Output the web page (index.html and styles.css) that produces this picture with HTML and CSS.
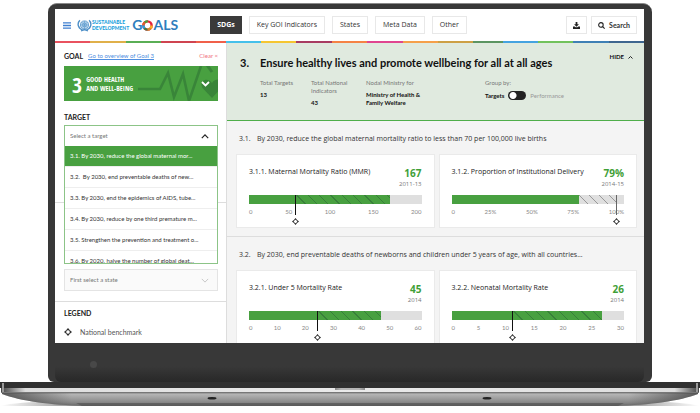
FILE: index.html
```html
<!DOCTYPE html>
<html lang="en">
<head>
<meta charset="utf-8">
<meta name="viewport" content="width=device-width, initial-scale=1">
<title>Sustainable Development Goals</title>
<link rel="stylesheet" href="styles.css">
</head>
<body>
<svg class="defs" width="0" height="0" aria-hidden="true">
  <symbol id="benchmark" viewBox="0 0 14 14">
    <circle cx="7" cy="7" r="4" fill="#fff" stroke="currentColor" stroke-width="1.6"/>
    <path d="M7 0 9.4 3H4.600ZM7 14 4.600 11H9.400ZM0 7 3 4.600V9.400ZM14 7 11 9.400V4.600Z" fill="currentColor"/>
  </symbol>
</svg>
<div class="laptop">
  <div class="lid">
    <div class="screen">
      <header class="topbar">
        <button class="menu" aria-label="Menu"><svg viewBox="0 0 8 7"><path d="M0 .8h8M0 3.500h8M0 6.200h8" stroke="#3f7fd0" stroke-width="1.300"/></svg></button>
        <a class="logo" href="#">
          <svg class="emblem" viewBox="0 0 26 22" fill="none" stroke="#4d8fc7">
            <circle cx="13" cy="10" r="7" stroke-width="1.300" fill="#b9d6ee"/>
            <circle cx="13" cy="10" r="3.500"/>
            <path d="M13 3v14M6 10h14M8 5l10 10M18 5 8 15" stroke-width=".8"/>
            <path d="M5 2C0 7 1 15 9 18.500M21 2c5 5 4 13-4 16.500M7 20.500l6-2.500 6 2.500" stroke-width="2.400"/>
          </svg>
          <span class="logo-small">SUSTAINABLE<br>DEVELOPMENT</span>
          <span class="logo-big">G<svg class="wheel" viewBox="0 0 20 20" fill="none" stroke-width="4.500">
            <circle cx="10" cy="10" r="7.500" stroke="#e5243b"/>
            <circle cx="10" cy="10" r="7.500" stroke="#fcb022" pathLength="8" stroke-dasharray="1 7"/>
            <circle cx="10" cy="10" r="7.500" stroke="#d08f2a" pathLength="8" stroke-dasharray="1 7" stroke-dashoffset="-1"/>
            <circle cx="10" cy="10" r="7.500" stroke="#3f7e44" pathLength="8" stroke-dasharray="1 7" stroke-dashoffset="-2"/>
            <circle cx="10" cy="10" r="7.500" stroke="#26a3dd" pathLength="8" stroke-dasharray="1 7" stroke-dashoffset="-3"/>
            <circle cx="10" cy="10" r="7.500" stroke="#e0602c" pathLength="8" stroke-dasharray="1 7" stroke-dashoffset="-4"/>
            <circle cx="10" cy="10" r="7.500" stroke="#4c9f38" pathLength="8" stroke-dasharray="1 7" stroke-dashoffset="-5"/>
          </svg>ALS</span>
        </a>
        <nav class="nav">
          <a class="active" href="#">SDGs</a>
          <a href="#">Key GOI Indicators</a>
          <a href="#">States</a>
          <a href="#">Meta Data</a>
          <a href="#">Other</a>
        </nav>
        <div class="tools">
          <button aria-label="Download"><svg viewBox="0 0 12 12"><path d="M4.500 0h3v4h2.700L6 8.200 1.800 4h2.700ZM0 7.500h3L4.500 9h3L9 7.500h3V12H0Z" fill="#222"/></svg></button>
          <button><svg viewBox="0 0 12 12" fill="none" stroke="#222" stroke-width="1.800"><circle cx="5" cy="5" r="3.900"/><path d="m8 8 3.400 3.400"/></svg>Search</button>
        </div>
      </header>
      <div class="stripe"></div>
      <div class="columns">
        <aside class="sidebar">
          <section class="target">
            <div class="goal-row"><h2>GOAL</h2><a href="#">Go to overview of Goal 3</a><button class="clear">Clear ×</button></div>
            <button class="goal">
              <svg class="pulse" viewBox="0 0 80 35" fill="none" stroke="#398539" stroke-width="2.600">
                <path d="M0 23h22l8-16 6 24 9-23 6 27 12-35"/>
                <path d="m69-1 5 7" stroke-width="3"/>
                <path d="M74 32 64.500 22c-4-6 4-12 9.500-5 5-7 14-2 10 4Z" fill="#398539" stroke="none"/>
                <path d="m64 16 3.500 3.500 3.500-3.500" stroke="#fff" stroke-width="1.800"/>
              </svg>
              <span class="goal-number">3</span>
              <span class="goal-name">GOOD HEALTH<br>AND WELL-BEING</span>
            </button>
            <h2><label for="target">TARGET</label></h2>
            <div class="picker open">
              <select id="target"><option>Select a target</option></select>
              <svg viewBox="0 0 10 6"><path d="m1 5 4-4 4 4" fill="none" stroke="#222" stroke-width="1.500"/></svg>
              <ul class="options" role="listbox" aria-label="Targets">
                <li role="option" aria-selected="true">3.1. By 2030, reduce the global maternal mor...</li>
                <li role="option">3.2. &nbsp;By 2030, end preventable deaths of new...</li>
                <li role="option">3.3. By 2030, end the epidemics of AIDS, tube...</li>
                <li role="option">3.4. By 2030, reduce by one third premature m...</li>
                <li role="option">3.5. Strengthen the prevention and treatment o...</li>
                <li role="option">3.6. By 2020, halve the number of global deat...</li>
              </ul>
            </div>
          </section>
          <section class="state">
            <div class="picker">
              <select aria-label="State" disabled><option>First select a state</option></select>
              <svg viewBox="0 0 10 6"><path d="m1 1 4 4 4-4" fill="none" stroke="#bbb"/></svg>
            </div>
          </section>
          <section class="legend">
            <h2>LEGEND</h2>
            <p><svg><use href="#benchmark"/></svg>National benchmark</p>
          </section>
        </aside>
        <main>
          <section class="hero">
            <span class="hero-number">3.</span>
            <div class="hero-body">
              <h1>Ensure healthy lives and promote wellbeing for all at all ages</h1>
              <div class="facts">
                <dl><dt>Total Targets</dt><dd>13</dd></dl>
                <dl><dt>Total National<br>Indicators</dt><dd>43</dd></dl>
                <dl><dt>Nodal Ministry for</dt><dd>Ministry of Health &amp;<br>Family Welfare</dd></dl>
                <dl><dt>Group by:</dt><dd><label class="switch">Targets<input type="checkbox" role="switch"><span>Performance</span></label></dd></dl>
              </div>
            </div>
            <button class="hide">HIDE<svg viewBox="0 0 10 6"><path d="m1 5 4-4 4 4" fill="none" stroke="#222" stroke-width="2"/></svg></button>
          </section>
          <section class="group">
            <h2><span>3.1.</span>By 2030, reduce the global maternal mortality ratio to less than 70 per 100,000 live births</h2>
            <div class="cards">
              <article class="card">
                <div class="card-head"><h3>3.1.1. Maternal Mortality Ratio (MMR)</h3><p><strong>167</strong>2011-13</p></div>
                <div class="bar"><i class="solid" style="width:26.5%"></i><i class="gap" style="width:55.5%"></i><b style="left:26.5%"><svg><use href="#benchmark"/></svg></b></div>
                <div class="ticks"><span>0</span><span>50</span><span>100</span><span>150</span><span>200</span></div>
              </article>
              <article class="card">
                <div class="card-head"><h3>3.1.2. Proportion of Institutional Delivery</h3><p><strong>79%</strong>2014-15</p></div>
                <div class="bar"><i class="solid" style="width:74%"></i><i class="short" style="width:21.500%"></i><b class="soft" style="left:95.500%"><svg><use href="#benchmark"/></svg></b></div>
                <div class="ticks"><span>0</span><span>25%</span><span>50%</span><span>75%</span><span>100%</span></div>
              </article>
            </div>
          </section>
          <section class="group last">
            <h2><span>3.2.</span>By 2030, end preventable deaths of newborns and children under 5 years of age, with all countries...</h2>
            <div class="cards">
              <article class="card">
                <div class="card-head"><h3>3.2.1. Under 5 Mortality Rate</h3><p><strong>45</strong>2014</p></div>
                <div class="bar"><i class="solid" style="width:39.500%"></i><i class="gap" style="width:37%"></i><b style="left:39.500%"><svg><use href="#benchmark"/></svg></b></div>
                <div class="ticks"><span>0</span><span>10</span><span>20</span><span>30</span><span>40</span><span>50</span><span>60</span></div>
              </article>
              <article class="card">
                <div class="card-head"><h3>3.2.2. Neonatal Mortality Rate</h3><p><strong>26</strong>2014</p></div>
                <div class="bar"><i class="solid" style="width:35%"></i><i class="gap" style="width:52%"></i><b style="left:35%"><svg><use href="#benchmark"/></svg></b></div>
                <div class="ticks"><span>0</span><span>5</span><span>10</span><span>15</span><span>20</span><span>25</span><span>30</span></div>
              </article>
            </div>
          </section>
        </main>
      </div>
    </div>
    <div class="chin"><span class="camera"></span></div>
  </div>
  <svg class="base" viewBox="0 0 700 31" preserveAspectRatio="none" aria-hidden="true">
    <defs>
      <linearGradient id="band" x1="0" x2="1"><stop offset="0" stop-color="#444"/><stop offset=".012" stop-color="#777"/><stop offset=".035" stop-color="#ddd"/><stop offset=".5" stop-color="#eaeaea"/><stop offset=".965" stop-color="#ddd"/><stop offset=".988" stop-color="#777"/><stop offset="1" stop-color="#444"/></linearGradient>
      <linearGradient id="body" x2="0" y2="1"><stop offset="0" stop-color="#8e8e8e"/><stop offset=".1" stop-color="#b4b4b4"/><stop offset=".7" stop-color="#8a8a8a"/><stop offset="1" stop-color="#666"/></linearGradient>
      <linearGradient id="shade" x1="0" x2="1"><stop offset="0" stop-color="#555" stop-opacity="0"/><stop offset=".1" stop-color="#555"/><stop offset=".9" stop-color="#555"/><stop offset="1" stop-color="#555" stop-opacity="0"/></linearGradient>
      <linearGradient id="sides" x1="0" x2="1"><stop offset="0" stop-color="#333" stop-opacity=".7"/><stop offset=".1" stop-color="#333" stop-opacity="0"/><stop offset=".9" stop-color="#333" stop-opacity="0"/><stop offset="1" stop-color="#333" stop-opacity=".7"/></linearGradient>
      <linearGradient id="notch" x1="0" x2="1"><stop offset="0" stop-color="#888"/><stop offset=".2" stop-color="#b5b5b5"/><stop offset=".8" stop-color="#b5b5b5"/><stop offset="1" stop-color="#888"/></linearGradient>
    </defs>
    <path d="M0 24Q20 19 75 20h550q55-1 75 4Z" fill="url(#shade)" opacity=".6"/>
    <path d="M2 11h696v1C680 19 650 23 615 24H85C50 23 20 19 2 12Z" fill="url(#body)"/>
    <path d="M2 11h696v1C680 19 650 23 615 24H85C50 23 20 19 2 12Z" fill="url(#sides)"/>
    <path d="M76 21h548l-6 3H82Z" fill="#555" opacity=".7"/>
    <path d="M0 0h700v6H0Z" fill="#303030"/>
    <path d="M1 6h698v4H1Z" fill="url(#band)"/>
    <path d="M335 6h30v2h-30Z" fill="url(#notch)"/>
    <path d="M1 10h698v1H1Z" fill="#777"/>
    <path d="M2 1h2v9H2ZM696 1h2v9h-2Z" fill="#999"/>
    <ellipse cx="212" cy="16.300" rx="4.500" ry="1.300" fill="#222"/>
    <ellipse cx="487" cy="16.300" rx="4.500" ry="1.300" fill="#222"/>
  </svg>
</div>
</body>
</html>
```
FILE: styles.css
```css
* { box-sizing: border-box; }
body { margin: 0; background: #fff; color: #333; font: 7px/10px Lato, "Open Sans", sans-serif; }
h1, h2, h3, p, dl, dd, ul { margin: 0; padding: 0; }
button, select { font: inherit; color: inherit; background: none; border: 0; padding: 0; margin: 0; border-radius: 0; }
a { color: inherit; text-decoration: none; }
svg { display: block; flex: none; }
.defs { position: absolute; }

.laptop { padding-top: 3px; }
.lid { margin: 0 48px; padding: 5px 8px 0 7px; border-radius: 9px 9px 6px 6px; background: #383838; border-top: 1px solid #8a8a8a; }
.screen { background: #fff; overflow: hidden; }
.chin { height: 39px; padding: 18px 0 0 35px; border-radius: 0 0 6px 6px; background: linear-gradient(#383838 60%, #282828); }
.camera { display: block; width: 7px; height: 7px; border-radius: 50%; background: #484848; }
.base { width: 100%; height: 31px; }

.topbar { display: flex; align-items: center; height: 32px; padding: 0 7px 0 8px; }
.menu svg { width: 8px; height: 7px; }
.logo { display: flex; align-items: center; margin-left: 6px; color: #1ba0dc; }
.emblem { width: 15px; height: 13px; }
.logo-small { font-size: 5px; line-height: 6px; font-weight: 900; }
.logo-big { display: flex; align-items: center; margin-left: 3px; font-size: 14px; line-height: 16px; font-weight: 700; color: #2f7ebd; }
.wheel { width: 11px; height: 11px; }
.nav { display: flex; gap: 7px; margin-left: 32px; font-family: "Open Sans", sans-serif; font-size: 7px; }
.nav a, .tools button { border: 1px solid #e8e8e8; padding: 3px 7px; line-height: 10px; }
.nav a.active { background: #3a3a3a; border-color: #3a3a3a; color: #fff; font-weight: 700; padding: 3px 6px; }
.tools { display: flex; gap: 4px; margin-left: auto; }
.tools button { display: flex; align-items: center; gap: 4px; padding: 3px 6px; font-weight: 700; }
.tools svg { width: 7px; height: 7px; }
.stripe { height: 2px; background: linear-gradient(90deg, #e9525f 0 6%, #e0b04a 6% 12%, #5aae55 12% 18%, #cf4450 18% 24%, #f0604a 24% 29%, #45c0ea 29% 35%, #f5c632 35% 41%, #a83c62 41% 47%, #f58345 47% 53%, #e04590 53% 59%, #f5a04a 59% 65%, #cda045 65% 71%, #5c9562 71% 76%, #45a3e0 76% 82%, #72c25c 82% 88%, #3f80b5 88% 94%, #3f668f 94%); }

.columns { display: grid; grid-template-columns: 172px 1fr; }
.sidebar { border-right: 1px solid #ddd; background: #fff; }
.sidebar section { padding: 0 8px 0 9px; }
.sidebar h2 { font-size: 7px; line-height: 10px; font-weight: 700; color: #222; }
.sidebar .target { height: 160px; padding-top: 8px; border-bottom: 1px solid #ddd; }
.goal-row { display: flex; font-size: 6px; margin-bottom: 5px; }
.goal-row a { margin-left: 5px; color: #4e8ee0; text-decoration: underline; }
.clear { margin-left: auto; color: #f0707c; }
.goal { position: relative; display: flex; align-items: center; gap: 4px; width: 100%; height: 35px; margin-bottom: 11px; padding-left: 8px; background: #48a040; color: #fff; font-family: "Open Sans Condensed", "Roboto Condensed", "DejaVu Sans Condensed", sans-serif; font-weight: 700; text-align: left; overflow: hidden; }
.goal-number { font-size: 22px; line-height: 24px; }
.goal-name { font-size: 7px; line-height: 9px; position: relative; }
.pulse { position: absolute; right: 0; top: 0; width: 80px; height: 35px; }
.target > h2 { margin-bottom: 3px; }
.picker { position: relative; border: 1px solid #e4e4e4; }
.picker select { display: block; width: 100%; height: 20px; padding-left: 5px; appearance: none; font-size: 6px; color: #777; opacity: 1; }
.picker > svg { position: absolute; right: 8px; top: 8px; width: 8px; height: 5px; }
.picker.open { border-color: #8cc487; }
.state .picker { background: #fafafa; }
.options { position: absolute; z-index: 2; top: 20px; left: -1px; right: -1px; height: 118px; overflow: hidden; list-style: none; background: #fff; border: 1px solid #8cc487; border-top: 0; }
.options li { height: 21px; padding: 0 5px; font-size: 6px; line-height: 20px; border-bottom: 1px solid #eee; white-space: nowrap; }
.options [aria-selected] { background: #48a040; color: #fff; }
.sidebar .state { padding-top: 66px; padding-bottom: 10px; border-bottom: 1px solid #ddd; }
.sidebar .legend { padding-top: 6px; }
.legend p { display: flex; align-items: center; gap: 8px; margin-top: 9px; padding-bottom: 5px; color: #555; }
.legend svg { width: 8px; height: 8px; color: #111; }

main { background: #f4f4f4; min-width: 0; }
.hero { display: flex; padding: 12px 11px 13px 13px; background: #e0eadf; border-bottom: 1px solid #4fae4a; color: #111; }
.hero-number { width: 20px; flex: none; font-size: 11px; line-height: 16px; font-weight: 700; }
.hero-body { flex: 1; }
h1 { font-size: 11px; line-height: 16px; font-weight: 700; }
.facts { display: grid; grid-template-columns: 51px 55px 119px 1fr; margin-top: 8px; font-size: 6px; line-height: 8px; }
dt { color: #777; }
dd { margin-top: 4px; font-weight: 700; }
.switch { display: flex; align-items: center; gap: 4px; }
.switch span { color: #999; font-weight: 400; }
.switch input { appearance: none; width: 18px; height: 9px; margin: 0; border-radius: 5px; background: radial-gradient(circle at 5px 50%, #fff 3px, #222 4px); }
.hide { display: flex; gap: 4px; align-items: center; align-self: flex-start; height: 4px; font-size: 6px; font-weight: 700; }
.hide svg { width: 5px; height: 3px; }
.group { padding: 13px 7px 8px 9px; border-bottom: 1px solid #ddd; }
.group.last { padding-bottom: 0; border: 0; }
.group h2 { display: flex; padding-left: 3px; margin-bottom: 10px; font: 400 7px/10px "Open Sans", sans-serif; white-space: nowrap; }
.group h2 span { width: 18px; }
.cards { display: grid; grid-template-columns: 1fr 1fr; gap: 4px; }
.card { height: 74px; padding: 12px 12px 0; background: #fff; border: 1px solid #eaeaea; }
.last .card { height: 73px; border-bottom: 0; }
.card-head { display: flex; justify-content: space-between; height: 28px; white-space: nowrap; }
.card h3 { font: 400 7px/10px "Open Sans", sans-serif; color: #222; }
.card p { text-align: right; font: 6px/10px "Open Sans", sans-serif; color: #777; }
.card strong { display: block; font: 700 10px/12px "Open Sans", sans-serif; color: #3fa037; }
.bar { position: relative; display: flex; height: 9px; background: #dfdfdf; }
.solid { background: #48a040; }
.gap { background: repeating-linear-gradient(45deg, #48a040 0 7px, #38803a 7px 8px); }
.short { background: repeating-linear-gradient(45deg, #dfdfdf 0 6px, #999 6px 7px); }
.bar b { position: absolute; top: 0; width: 1px; height: 20px; background: #111; color: #222; }
.bar b.soft { background: #666; }
.bar b svg { position: absolute; top: 23px; left: -3px; width: 7px; height: 7px; }
.ticks { display: flex; justify-content: space-between; margin-top: 4px; font-size: 6px; line-height: 8px; color: #888; }
```
